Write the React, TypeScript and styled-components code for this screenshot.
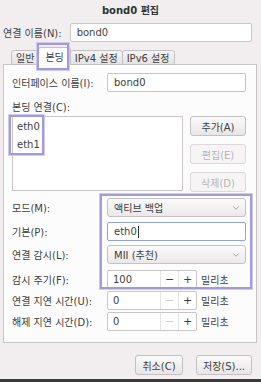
import styled, { createGlobalStyle } from "styled-components";
import { ChevronDown } from "lucide-react";

const GlobalStyle = createGlobalStyle`
  html, body {
    margin: 0;
    padding: 0;
  }
  body {
    font-family: "DejaVu Sans", "Noto Sans CJK KR", sans-serif;
    font-size: 10px;
    color: #3c3f41;
  }
`;

const Window = styled.div`
  width: 261px;
  height: 382px;
  display: flex;
  flex-direction: column;
  background: #f2eef0;
  box-sizing: border-box;
  border-bottom: 3px solid #3b3b3b;
  position: relative;
`;

const Title = styled.div`
  height: 19px;
  display: flex;
  align-items: center;
  justify-content: center;
  font-weight: bold;
  font-size: 10px;
  color: #2e3436;
`;

const NameRow = styled.div`
  display: flex;
  align-items: center;
  gap: 8px;
  padding: 4px 9px 0 3px;
`;

const Label = styled.span`
  font-size: 10px;
  white-space: nowrap;
`;

const TextInput = styled.div<{ $focused?: boolean }>`
  flex: 1;
  height: 19px;
  box-sizing: border-box;
  border: 1px solid ${(p) => (p.$focused ? "#8ea2d6" : "#c9c5c8")};
  border-radius: 2px;
  background: #fff;
  display: flex;
  align-items: center;
  padding-left: 6px;
  font-size: 10px;
`;

const Caret = styled.span`
  display: inline-block;
  width: 1px;
  height: 12px;
  background: #2e3436;
  margin-left: 1px;
`;

const TabBar = styled.div`
  display: flex;
  align-items: flex-end;
  padding: 5px 0 0 11px;
  height: 18px;
  position: relative;
  z-index: 1;
  margin-bottom: -1px;
`;

const Tab = styled.div<{ $active?: boolean }>`
  height: ${(p) => (p.$active ? "18px" : "15px")};
  box-sizing: border-box;
  padding: 0 ${(p) => (p.$active ? "6px" : "4px")};
  display: flex;
  align-items: center;
  border: 1px solid #c4c0c3;
  border-bottom: ${(p) => (p.$active ? "1px solid #fff" : "1px solid #c4c0c3")};
  border-radius: 3px 3px 0 0;
  background: ${(p) =>
    p.$active ? "#fff" : "linear-gradient(#f6f3f5, #e6e2e4)"};
  font-size: 10px;
  margin-right: -1px;
  position: relative;
`;

const Highlight = styled.div`
  position: absolute;
  border: 2px solid #a29ad9;
  box-shadow: 0 0 0 1px #cfcaf0;
  pointer-events: none;
  box-sizing: border-box;
  z-index: 3;
`;

const Panel = styled.div`
  margin: 0 4px 0 3px;
  border: 1px solid #c9c5c8;
  background: #fdfcfd;
  padding: 8px 10px 11px 8px;
  display: flex;
  flex-direction: column;
  position: relative;
`;

const Grid = styled.div`
  display: grid;
  grid-template-columns: 95px 1fr;
  align-items: center;
`;

const Row = styled.div`
  display: contents;
`;

const Cell = styled.div<{ $top?: number }>`
  margin-top: ${(p) => p.$top ?? 0}px;
  display: flex;
  align-items: center;
`;

const SectionLabel = styled.div`
  margin-top: 7px;
  height: 14px;
  display: flex;
  align-items: center;
`;

const ListArea = styled.div`
  display: flex;
  gap: 7px;
  margin-top: 3px;
  position: relative;
`;

const ListBox = styled.div`
  width: 171px;
  height: 75px;
  box-sizing: border-box;
  border: 1px solid #c9c5c8;
  background: #fff;
  padding: 3px 0 0 4px;
  display: flex;
  flex-direction: column;
  gap: 5px;
`;

const ListItem = styled.div`
  height: 13px;
  display: flex;
  align-items: center;
`;

const ButtonColumn = styled.div`
  display: flex;
  flex-direction: column;
  gap: 8px;
  width: 56px;
`;

const Button = styled.div<{ $disabled?: boolean; $width?: number }>`
  height: 20px;
  width: ${(p) => (p.$width ? `${p.$width}px` : "100%")};
  box-sizing: border-box;
  border: 1px solid ${(p) => (p.$disabled ? "#dcd8db" : "#c4c0c3")};
  border-radius: 3px;
  background: ${(p) =>
    p.$disabled ? "#f6f4f5" : "linear-gradient(#fbfafa, #e9e5e7)"};
  color: ${(p) => (p.$disabled ? "#b8b4b7" : "#3c3f41")};
  display: flex;
  align-items: center;
  justify-content: center;
  font-size: 10px;
`;

const Select = styled.div`
  flex: 1;
  height: 19px;
  box-sizing: border-box;
  border: 1px solid #c4c0c3;
  border-radius: 3px;
  background: linear-gradient(#fbfafa, #ece8ea);
  display: flex;
  align-items: center;
  justify-content: space-between;
  padding: 0 4px 0 6px;
  font-size: 10px;
`;

const SpinWrap = styled.div`
  display: flex;
  align-items: center;
  gap: 4px;
  flex: 1;
`;

const Spin = styled.div`
  width: 90px;
  height: 19px;
  box-sizing: border-box;
  border: 1px solid #c9c5c8;
  border-radius: 2px;
  background: #fff;
  display: flex;
`;

const SpinValue = styled.div`
  flex: 1;
  display: flex;
  align-items: center;
  padding-left: 5px;
`;

const SpinButton = styled.div<{ $disabled?: boolean }>`
  width: 17px;
  border-left: 1px solid #e6e3e5;
  display: flex;
  align-items: center;
  justify-content: center;
  font-size: 11px;
  color: ${(p) => (p.$disabled ? "#cdcacc" : "#3c3f41")};
`;

const Footer = styled.div`
  display: flex;
  justify-content: flex-end;
  gap: 13px;
  padding: 12px 9px 0 0;
`;

const spinRows = [
  { label: "감시 주기(F):", value: "100", minusDisabled: false, top: 6 },
  { label: "연결 지연 시간(U):", value: "0", minusDisabled: true, top: 2 },
  { label: "해제 지연 시간(D):", value: "0", minusDisabled: true, top: 2 },
];

export default function App() {
  return (
    <Window>
      <GlobalStyle />
      <Title>bond0 편집</Title>
      <NameRow>
        <Label>연결 이름(N):</Label>
        <TextInput>bond0</TextInput>
      </NameRow>
      <TabBar>
        <Tab>일반</Tab>
        <Tab $active>본딩</Tab>
        <Tab>IPv4 설정</Tab>
        <Tab>IPv6 설정</Tab>
        <Highlight style={{ left: 37, top: 1, width: 32, height: 27 }} />
      </TabBar>
      <Panel>
        <Grid>
          <Label>인터페이스 이름(I):</Label>
          <TextInput>bond0</TextInput>
        </Grid>
        <SectionLabel>본딩 연결(C):</SectionLabel>
        <ListArea>
          <ListBox>
            <ListItem>eth0</ListItem>
            <ListItem>eth1</ListItem>
          </ListBox>
          <ButtonColumn>
            <Button>추가(A)</Button>
            <Button $disabled>편집(E)</Button>
            <Button $disabled>삭제(D)</Button>
          </ButtonColumn>
          <Highlight style={{ left: -3, top: -1, width: 35, height: 40 }} />
        </ListArea>
        <Grid style={{ position: "relative" }}>
          <Row>
            <Label style={{ marginTop: 6 }}>모드(M):</Label>
            <Cell $top={6}>
              <Select>
                액티브 백업
                <ChevronDown size={10} color="#9a9698" />
              </Select>
            </Cell>
          </Row>
          <Row>
            <Label style={{ marginTop: 5 }}>기본(P):</Label>
            <Cell $top={5}>
              <TextInput $focused>
                eth0
                <Caret />
              </TextInput>
            </Cell>
          </Row>
          <Row>
            <Label style={{ marginTop: 4 }}>연결 감시(L):</Label>
            <Cell $top={4}>
              <Select>
                MII (추천)
                <ChevronDown size={10} color="#9a9698" />
              </Select>
            </Cell>
          </Row>
          {spinRows.map((r) => (
            <Row key={r.label}>
              <Label style={{ marginTop: r.top }}>{r.label}</Label>
              <Cell $top={r.top}>
                <SpinWrap>
                  <Spin>
                    <SpinValue>{r.value}</SpinValue>
                    <SpinButton $disabled={r.minusDisabled}>−</SpinButton>
                    <SpinButton>+</SpinButton>
                  </Spin>
                  <Label>밀리초</Label>
                </SpinWrap>
              </Cell>
            </Row>
          ))}
          <Highlight style={{ left: 88, top: 2, width: 152, height: 95 }} />
        </Grid>
      </Panel>
      <Footer>
        <Button $width={48}>취소(C)</Button>
        <Button $width={56}>저장(S)...</Button>
      </Footer>
    </Window>
  );
}
